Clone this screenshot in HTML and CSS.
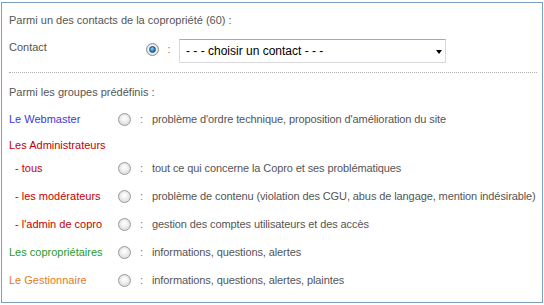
FILE: index.html
```html
<!DOCTYPE html>
<html lang="fr">
<head>
<meta charset="utf-8">
<title>Destinataires</title>
<link rel="stylesheet" href="styles.css">
</head>
<body>
<div class="box">
  <div class="intro">Parmi un des contacts de la copropriété (60) :</div>
  <div class="contact-row">
    <span class="contact-label">Contact</span>
    <span class="radio checked"></span>
    <span class="colon contact-colon">:</span>
    <div class="select">
      <span class="select-text">- - - choisir un contact - - -</span>
      <span class="arrow"></span>
    </div>
  </div>
  <div class="sep"></div>
  <div class="intro2">Parmi les groupes prédéfinis :</div>
  <div class="row">
    <span class="label c-blue">Le Webmaster</span>
    <span class="radio"></span>
    <span class="colon">:</span>
    <span class="desc">problème d'ordre technique, proposition d'amélioration du site</span>
  </div>
  <div class="heading c-red">Les Administrateurs</div>
  <div class="row">
    <span class="label sub c-red">- tous</span>
    <span class="radio"></span>
    <span class="colon">:</span>
    <span class="desc">tout ce qui concerne la Copro et ses problématiques</span>
  </div>
  <div class="row">
    <span class="label sub c-red">- les modérateurs</span>
    <span class="radio"></span>
    <span class="colon">:</span>
    <span class="desc">problème de contenu (violation des CGU, abus de langage, mention indésirable)</span>
  </div>
  <div class="row">
    <span class="label sub c-red">- l'admin de copro</span>
    <span class="radio"></span>
    <span class="colon">:</span>
    <span class="desc">gestion des comptes utilisateurs et des accès</span>
  </div>
  <div class="row">
    <span class="label c-green">Les copropriétaires</span>
    <span class="radio"></span>
    <span class="colon">:</span>
    <span class="desc">informations, questions, alertes</span>
  </div>
  <div class="row">
    <span class="label c-orange">Le Gestionnaire</span>
    <span class="radio"></span>
    <span class="colon">:</span>
    <span class="desc">informations, questions, alertes, plaintes</span>
  </div>
</div>
</body>
</html>
```

FILE: styles.css
```css
html, body {
  margin: 0;
  padding: 0;
  background: #ffffff;
}
body {
  font-family: "Liberation Sans", Arial, sans-serif;
  font-size: 11px;
  color: #555555;
}
.box {
  margin: 2px 0 0 1px;
  width: 542px;
  height: 301px;
  box-sizing: border-box;
  border: 1px solid #7b9ebd;
  padding: 0 5px 0 7px;
}
.intro {
  padding-top: 10px;
  line-height: 14px;
}
.contact-row {
  margin-top: 12px;
  height: 24px;
  display: flex;
  align-items: flex-start;
}
.contact-label {
  width: 137px;
  flex: none;
  line-height: 16px;
}
.contact-row .radio {
  margin-top: 4px;
}
.colon {
  width: 21px;
  flex: none;
  text-align: center;
  color: #777;
}
.contact-colon {
  width: 20px;
  line-height: 20px;
}
.select {
  width: 267px;
  height: 24px;
  box-sizing: border-box;
  border: 1px solid #d8d8de;
  border-top-color: #a9a9a9;
  border-radius: 1px;
  display: flex;
  align-items: center;
  justify-content: space-between;
  padding: 0 2px 0 6px;
  background: #fff;
}
.select-text {
  font-size: 12px;
  color: #000;
}
.arrow {
  width: 0;
  height: 0;
  border-left: 3px solid transparent;
  border-right: 3px solid transparent;
  border-top: 4px solid #000;
  margin-right: 1px;
  margin-top: 1px;
}
.sep {
  margin-top: 9px;
  border-top: 1px dotted #b0b0b0;
}
.intro2 {
  padding-top: 12px;
  line-height: 14px;
}
.row {
  display: flex;
  align-items: center;
  height: 28px;
}
.intro2 + .row {
  margin-top: 6px;
}
.label {
  width: 109px;
  flex: none;
  white-space: nowrap;
}
.label.sub {
  padding-left: 6px;
  box-sizing: border-box;
}
.heading {
  padding-top: 5px;
  padding-bottom: 2px;
  line-height: 14px;
}
.radio {
  width: 13px;
  height: 13px;
  box-sizing: border-box;
  border-radius: 50%;
  border: 1px solid #9a9a9a;
  background: radial-gradient(circle at 50% 40%, #ffffff 0%, #eeeeee 45%, #c8c8c8 100%);
  box-shadow: inset 0 0 0 1px #e2e2e2;
  flex: none;
  position: relative;
}
.radio.checked {
  border-color: #8a8a8a;
  background: #f4f4f4;
}
.radio.checked::after {
  content: "";
  position: absolute;
  left: 2px;
  top: 2px;
  width: 7px;
  height: 7px;
  box-sizing: border-box;
  border-radius: 50%;
  border: 1px solid #1a4e78;
  background: radial-gradient(circle at 40% 35%, #8fd0ff 0%, #2a88cc 50%, #135a94 100%);
}
.desc {
  white-space: nowrap;
  letter-spacing: -0.1px;
}
.c-blue { color: #3a3ad8; }
.c-red { color: #c40000; }
.c-green { color: #2a9a2a; }
.c-orange { color: #e27b1f; }
```
